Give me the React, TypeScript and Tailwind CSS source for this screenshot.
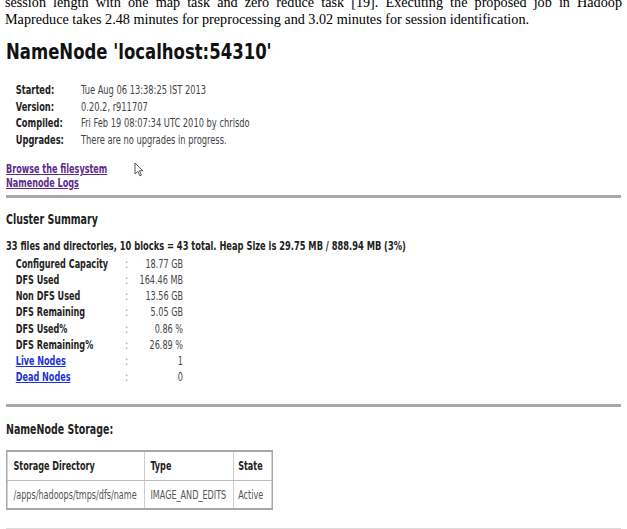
import React from 'react';

const info = [
  ['Started:', 'Tue Aug 06 13:38:25 IST 2013'],
  ['Version:', '0.20.2, r911707'],
  ['Compiled:', 'Fri Feb 19 08:07:34 UTC 2010 by chrisdo'],
  ['Upgrades:', 'There are no upgrades in progress.'],
];

const summary: { label: string; value: string; link?: boolean }[] = [
  { label: 'Configured Capacity', value: '18.77 GB' },
  { label: 'DFS Used', value: '164.46 MB' },
  { label: 'Non DFS Used', value: '13.56 GB' },
  { label: 'DFS Remaining', value: '5.05 GB' },
  { label: 'DFS Used%', value: '0.86 %' },
  { label: 'DFS Remaining%', value: '26.89 %' },
  { label: 'Live Nodes', value: '1', link: true },
  { label: 'Dead Nodes', value: '0', link: true },
];

const Cursor = () => (
  <svg width="10" height="15" viewBox="0 0 10 15" className="absolute left-[134px] top-[162px]">
    <path d="M1 1 L1 12 L3.8 9.4 L5.8 13.8 L7.4 13.1 L5.4 8.8 L9 8.8 Z" fill="#fff" stroke="#555" strokeWidth="1" strokeLinejoin="round" />
  </svg>
);

export default function App() {
  return (
    <div className="relative w-[627px] h-[529px] overflow-hidden bg-white text-[#1a1a1a]">
      <div className="px-[5px] mt-[-6px] font-['Liberation_Serif',serif] text-[14.2px] leading-[16.5px] text-black">
        <div className="text-justify [text-align-last:justify]">
          session length with one map task and zero reduce task [19]. Executing the proposed job in Hadoop
        </div>
        <div>Mapreduce takes 2.48 minutes for preprocessing and 3.02 minutes for session identification.</div>
      </div>

      <div className="origin-top-left scale-x-[0.75] w-[836px] px-[8px] font-['DejaVu_Sans_Condensed',sans-serif]">
        <h1 className="mt-[12px] font-['DejaVu_Sans',sans-serif] font-bold text-[22px] leading-[26px] text-[#111]">
          NameNode 'localhost:54310'
        </h1>

        <div className="mt-[17px] pl-[13px] text-[12.3px] leading-[16.7px]">
          {info.map(([k, v]) => (
            <div key={k} className="flex">
              <span className="w-[87px] font-bold text-[#222]">{k}</span>
              <span className="text-[#444]">{v}</span>
            </div>
          ))}
        </div>

        <div className="mt-[13px] text-[12px] leading-[14px] font-bold text-[#5b2a8c] flex flex-col items-start">
          <a className="underline">Browse the filesystem</a>
          <a className="underline">Namenode Logs</a>
        </div>

        <div className="mt-[5px] h-[3px] bg-[#a8a8a8]" />

        <h2 className="mt-[12px] text-[14px] leading-[18px] font-bold text-[#222]">Cluster Summary</h2>

        <div className="mt-[11px] text-[12.3px] leading-[14px] font-bold text-[#222]">
          33 files and directories, 10 blocks = 43 total. Heap Size is 29.75 MB / 888.94 MB (3%)
        </div>

        <div className="mt-[3px] pl-[13px] text-[12px] leading-[16.2px]">
          {summary.map((r) => (
            <div key={r.label} className="grid grid-cols-[146px_16px_61px]">
              <span className={r.link ? 'font-bold text-[#1a33d6] underline' : 'font-bold text-[#222]'}>
                {r.label}
              </span>
              <span className="text-[#888]">:</span>
              <span className="text-right text-[#444]">{r.value}</span>
            </div>
          ))}
        </div>

        <div className="mt-[19px] h-[3px] bg-[#a8a8a8]" />

        <h2 className="mt-[13px] text-[14px] leading-[18px] font-bold text-[#222]">NameNode Storage:</h2>

        <table className="mt-[12px] border-collapse border-2 border-[#a8a8a8] text-[12px]">
          <thead>
            <tr className="h-[29px]">
              <th className="w-[183px] border border-[#bdbdbd] px-[8px] text-left font-bold text-[#222]">Storage Directory</th>
              <th className="w-[119px] border border-[#bdbdbd] px-[8px] text-left font-bold text-[#222]">Type</th>
              <th className="w-[52px] border border-[#bdbdbd] px-[6px] text-left font-bold text-[#222]">State</th>
            </tr>
          </thead>
          <tbody>
            <tr className="h-[29px] text-[#555]">
              <td className="border border-[#bdbdbd] px-[8px]">/apps/hadoops/tmps/dfs/name</td>
              <td className="border border-[#bdbdbd] px-[8px]">IMAGE_AND_EDITS</td>
              <td className="border border-[#bdbdbd] px-[6px]">Active</td>
            </tr>
          </tbody>
        </table>

        <div className="mt-[18px] h-px bg-[#dcdcdc]" />
      </div>

      <Cursor />
    </div>
  );
}
